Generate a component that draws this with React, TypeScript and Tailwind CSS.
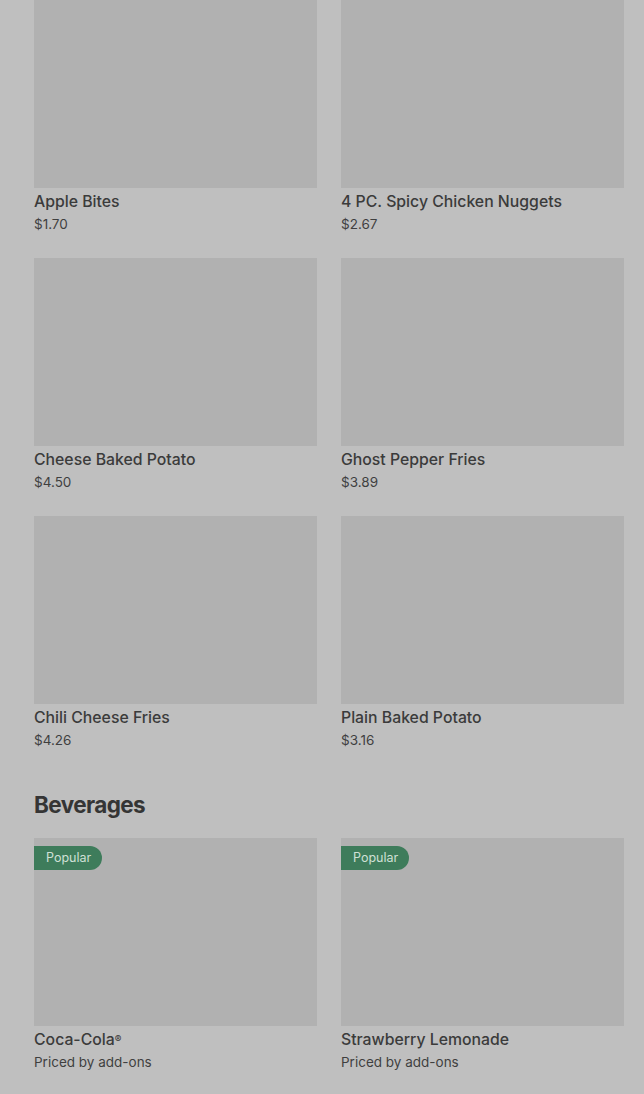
import React from "react";

type Item = { name: React.ReactNode; key: string; price: string; popular?: boolean };

const sides: Item[] = [
  { key: "a", name: "Apple Bites", price: "$1.70" },
  { key: "b", name: "4 PC. Spicy Chicken Nuggets", price: "$2.67" },
  { key: "c", name: "Cheese Baked Potato", price: "$4.50" },
  { key: "d", name: "Ghost Pepper Fries", price: "$3.89" },
  { key: "e", name: "Chili Cheese Fries", price: "$4.26" },
  { key: "f", name: "Plain Baked Potato", price: "$3.16" },
];

const beverages: Item[] = [
  {
    key: "g",
    name: (
      <>
        Coca-Cola<sup className="text-[10px] relative top-[-2px]">®</sup>
      </>
    ),
    price: "Priced by add-ons",
    popular: true,
  },
  { key: "h", name: "Strawberry Lemonade", price: "Priced by add-ons", popular: true },
];

function Card({ item }: { item: Item }) {
  return (
    <div className="flex flex-col">
      <div className="relative h-[188px] bg-[#b1b1b1]">
        {item.popular && (
          <span className="absolute left-0 top-[8px] flex h-[24px] items-center rounded-r-full bg-[#3e7c5b] pl-[12px] pr-[11px] text-[12.5px] text-[#cfe0d6]">
            Popular
          </span>
        )}
      </div>
      <div className="mt-[3px] text-[15.8px] leading-[21px] font-medium text-[#3b3b3b]">
        {item.name}
      </div>
      <div className="text-[13.5px] leading-[24px] text-[#3f3f3f]">{item.price}</div>
    </div>
  );
}

export default function App() {
  return (
    <div
      className="min-h-[1094px] w-full bg-[#bfbfbf] pl-[34px] pr-[20px]"
      style={{ fontFamily: "Inter, 'Noto Sans', sans-serif" }}
    >
      <div className="grid grid-cols-2 gap-x-[24px] gap-y-[22px]">
        {sides.map((it) => (
          <Card key={it.key} item={it} />
        ))}
      </div>
      <h2 className="mt-[37px] mb-[17px] text-[22.5px] leading-[32px] font-bold tracking-[-0.6px] text-[#353535]">
        Beverages
      </h2>
      <div className="grid grid-cols-2 gap-x-[24px] gap-y-[22px]">
        {beverages.map((it) => (
          <Card key={it.key} item={it} />
        ))}
      </div>
    </div>
  );
}
